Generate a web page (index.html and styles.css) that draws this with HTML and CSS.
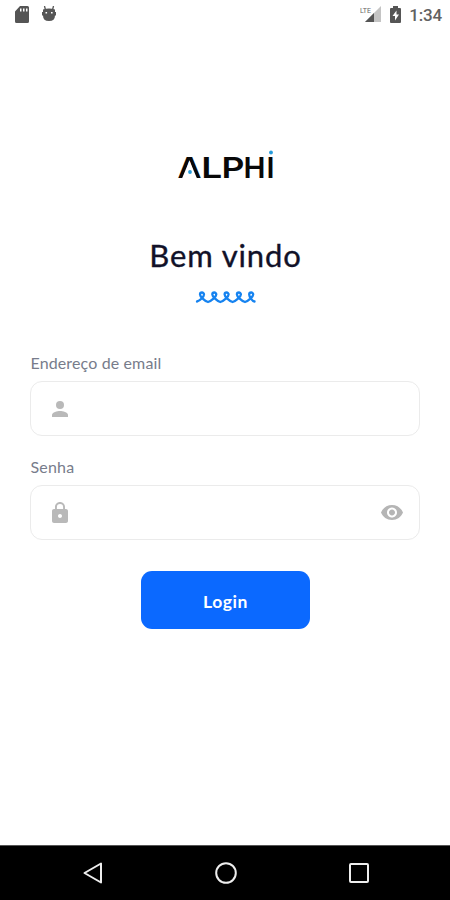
FILE: index.html
```html
<!DOCTYPE html>
<html lang="pt-BR">
<head>
<meta charset="utf-8">
<title>Login</title>
<link rel="stylesheet" href="styles.css">
</head>
<body>
<div class="screen">
  <header class="status">
    <svg class="sd" width="14" height="17" viewBox="0 0 14 17"><path fill="#555" fill-rule="evenodd" d="M5 0h7.500Q14 0 14 1.500v14Q14 17 12.500 17h-11Q0 17 0 15.500V5.500zM5 2.500v3h1.500v-3zM8 2.500v3h1.500v-3zM11 2.500v3h1.500v-3z"/></svg>
    <svg class="droid" width="14" height="16" viewBox="0 0 14 16"><path d="M2.500 0l1 4M11.500 0l-1 4" stroke="#555" stroke-width="1.300"/><path fill="#555" fill-rule="evenodd" d="M1 3.500Q7 1.500 13 3.500V6H14V9.500H13Q13 15 7 15T1 9.500H0V6H1zM3.500 6v1.600h1.600V6zM9 6v1.600h1.600V6z"/></svg>
    <svg class="signal" width="22" height="17" viewBox="0 0 22 17"><path d="M21 0v16H5z" fill="#c4c4c4"/><path d="M14 7v9H5z" fill="#555"/><text class="lte" x="0" y="7" textLength="11" lengthAdjust="spacingAndGlyphs">LTE</text></svg>
    <svg class="battery" width="11" height="17" viewBox="0 0 11 17"><path fill="#555" fill-rule="evenodd" d="M3 0h5v2h2q1 0 1 1v13q0 1-1 1H1q-1 0-1-1V3q0-1 1-1h2zM6.500 4.500L2.500 10H5v4.500L9 8.500H6.500z"/></svg>
    <span class="time">1:34</span>
  </header>
  <main>
    <svg class="logo" width="100" height="34" viewBox="0 0 100 34">
      <g class="word">
        <text x="2.500" y="28.500" textLength="24" lengthAdjust="spacingAndGlyphs">A</text>
        <text x="26.200" y="28.500" textLength="21" lengthAdjust="spacingAndGlyphs">L</text>
        <text x="46.500" y="28.500" textLength="23" lengthAdjust="spacingAndGlyphs">P</text>
        <text x="68.500" y="28.500" textLength="22" lengthAdjust="spacingAndGlyphs">H</text>
        <text x="91.500" y="28.500">I</text>
      </g>
      <path d="M14.500 11.500L21.800 29H7.200z" fill="#fff"/>
      <circle cx="15" cy="23" r="1.900" fill="#249bdc"/>
      <path d="M92 0h8v8h-8z" fill="#fff"/>
      <circle cx="96" cy="3.500" r="1.900" fill="#249bdc"/>
    </svg>
    <h1>Bem vindo</h1>
    <svg class="wave" width="62" height="14" viewBox="0 0 62 14"><path d="M2 11.500C5 11 9 6.500 9 4.500C9 1.800 5 1.800 5 4.500C5 6.500 9.500 11 13 12C16.500 11 21.300 6.500 21.300 4.500C21.300 1.800 17.300 1.800 17.300 4.500C17.300 6.500 22 11 25.300 12C29 11 33.600 6.500 33.600 4.500C33.600 1.800 29.600 1.800 29.600 4.500C29.600 6.500 34 11 37.600 12C41 11 45.900 6.500 45.900 4.500C45.900 1.800 41.900 1.800 41.900 4.500C41.900 6.500 46.500 11 50 12C53.500 11 58.200 6.500 58.200 4.500C58.200 1.800 54.200 1.800 54.200 4.500C54.200 6.500 57 11 59.500 11.500"/></svg>
    <form>
      <label class="email" for="email"><span>Endereço de email</span></label>
      <div class="field">
        <svg width="16" height="16" viewBox="4 4 16 16" fill="#b9b9b9"><circle cx="12" cy="8" r="4"/><path d="M12 14c-2.670 0-8 1.340-8 4v2h16v-2c0-2.660-5.330-4-8-4z"/></svg>
        <input id="email" type="email">
      </div>
      <label class="senha" for="senha"><span>Senha</span></label>
      <div class="field">
        <svg width="16" height="21" viewBox="4 1 16 21" fill="#b9b9b9"><path fill-rule="evenodd" d="M18 8h-1V6c0-2.760-2.240-5-5-5S7 3.240 7 6v2H6c-1.100 0-2 .9-2 2v10c0 1.100.9 2 2 2h12c1.100 0 2-.9 2-2V10c0-1.100-.9-2-2-2zm-6 9c-1.100 0-2-.9-2-2s.9-2 2-2 2 .9 2 2-.9 2-2 2zM15.100 8H8.900V6a3.100 3.100 0 0 1 6.200 0z"/></svg>
        <input id="senha" type="password">
        <svg width="22" height="15" viewBox="1 4.500 22 15" fill="#b5b5b5"><path d="M12 4.500C7 4.500 2.730 7.610 1 12c1.730 4.390 6 7.500 11 7.500s9.270-3.110 11-7.500c-1.730-4.390-6-7.500-11-7.500zM12 17c-2.760 0-5-2.240-5-5s2.240-5 5-5 5 2.240 5 5-2.240 5-5 5zm0-8c-1.660 0-3 1.340-3 3s1.340 3 3 3 3-1.340 3-3-1.340-3-3-3z"/></svg>
      </div>
      <button type="button">Login</button>
    </form>
  </main>
  <nav>
    <svg width="24" height="24" viewBox="0 0 24 24"><path d="M20 2.500v19L3.500 12z"/></svg>
    <svg width="24" height="24" viewBox="0 0 24 24"><circle cx="12" cy="12" r="9.800"/></svg>
    <svg width="24" height="24" viewBox="0 0 24 24"><rect x="3" y="3" width="18" height="18" rx="1"/></svg>
  </nav>
</div>
</body>
</html>
```
FILE: styles.css
```css
* { box-sizing: border-box; }
body { margin: 0; background: #fff; font-family: Lato, sans-serif; }
.screen { width: 450px; height: 900px; display: flex; flex-direction: column; overflow: hidden; }
svg { display: block; flex: none; }
.status { height: 30px; display: flex; align-items: center; padding: 0 8px 2px 15px; }
.droid { margin-left: 13px; }
.signal { margin-left: auto; }
.lte { font: 400 7px Roboto, sans-serif; fill: #666; }
.battery { margin-left: 8px; }
.time { font: 500 17px/20px Roboto, sans-serif; color: #616161; margin-left: 8px; letter-spacing: -.2px; padding-top: 1px; }
main { flex: 1; display: flex; flex-direction: column; align-items: center; padding-top: 119px; }
.logo { overflow: visible; }
.word { font: 600 29px Inter, sans-serif; fill: #080808; }
h1 { margin: 52px 0 0 1px; font-size: 31px; line-height: 40px; font-weight: 400; color: #111128; letter-spacing: .9px; -webkit-text-stroke: .35px #111128; }
.wave { margin: 15px 0 0 1px; fill: none; stroke: #1683f0; stroke-width: 2.3; stroke-linecap: round; }
form { width: 390px; display: flex; flex-direction: column; margin: 50px 0 0 1px; }
label { font-size: 16px; line-height: 20px; color: #777c8b; position: relative; top: -1px; }
.email { letter-spacing: .13px; }
.senha { margin-top: 22px; letter-spacing: .2px; }
.field { width: 390px; height: 55px; margin-top: 7px; border: 1px solid #ebebeb; border-radius: 12px; display: flex; align-items: center; padding: 0 16px 0 21px; margin-left: -.5px; }
input { flex: 1; min-width: 0; border: 0; outline: 0; background: none; }
button { align-self: center; width: 169px; height: 58px; margin-top: 31px; border: 0; border-radius: 11px; background: #0b69ff; color: #fff; font: 700 17.500px Lato, sans-serif; letter-spacing: .6px; padding: 2px 0 0; }
nav { height: 55px; background: #000; border-top: 1px solid #555; display: flex; justify-content: space-between; padding: 15px 79px 0 81px; }
nav svg { fill: none; stroke: #eee; stroke-width: 2; stroke-linejoin: round; }
```
